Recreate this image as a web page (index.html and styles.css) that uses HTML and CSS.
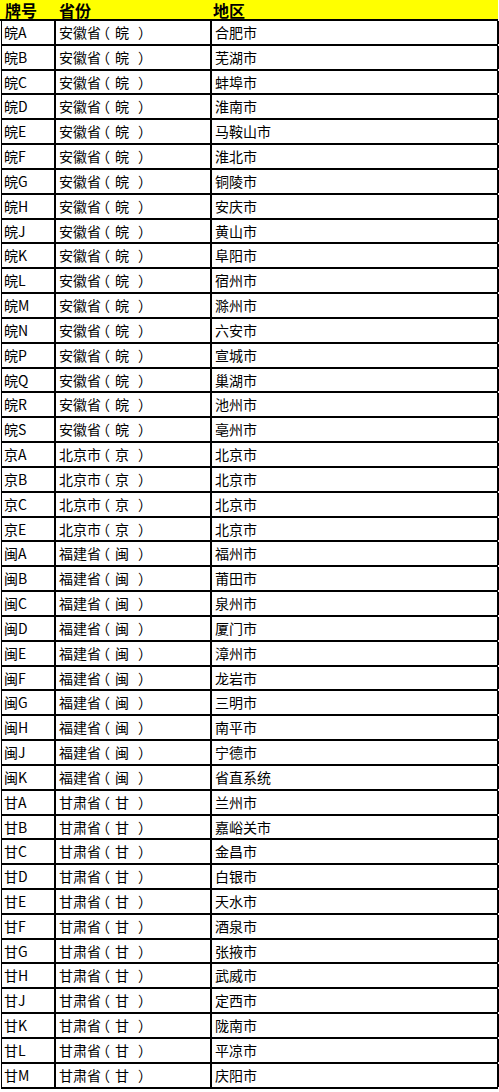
FILE: index.html
```html
<!DOCTYPE html>
<html lang="zh-CN">
<head>
<meta charset="utf-8">
<title>车牌号对照表</title>
<link rel="stylesheet" href="styles.css">
</head>
<body>
<div class="sheet">
  <div class="head">
    <div class="hc c1">牌号</div>
    <div class="hc c2">省份</div>
    <div class="hc c3">地区</div>
  </div>
  <div class="row"><div class="cell">皖A</div><div class="cell">安徽省<span class="lp">（</span>皖<span class="rp">）</span></div><div class="cell">合肥市</div></div>
  <div class="row"><div class="cell">皖B</div><div class="cell">安徽省<span class="lp">（</span>皖<span class="rp">）</span></div><div class="cell">芜湖市</div></div>
  <div class="row"><div class="cell">皖C</div><div class="cell">安徽省<span class="lp">（</span>皖<span class="rp">）</span></div><div class="cell">蚌埠市</div></div>
  <div class="row"><div class="cell">皖D</div><div class="cell">安徽省<span class="lp">（</span>皖<span class="rp">）</span></div><div class="cell">淮南市</div></div>
  <div class="row"><div class="cell">皖E</div><div class="cell">安徽省<span class="lp">（</span>皖<span class="rp">）</span></div><div class="cell">马鞍山市</div></div>
  <div class="row"><div class="cell">皖F</div><div class="cell">安徽省<span class="lp">（</span>皖<span class="rp">）</span></div><div class="cell">淮北市</div></div>
  <div class="row"><div class="cell">皖G</div><div class="cell">安徽省<span class="lp">（</span>皖<span class="rp">）</span></div><div class="cell">铜陵市</div></div>
  <div class="row"><div class="cell">皖H</div><div class="cell">安徽省<span class="lp">（</span>皖<span class="rp">）</span></div><div class="cell">安庆市</div></div>
  <div class="row"><div class="cell">皖J</div><div class="cell">安徽省<span class="lp">（</span>皖<span class="rp">）</span></div><div class="cell">黄山市</div></div>
  <div class="row"><div class="cell">皖K</div><div class="cell">安徽省<span class="lp">（</span>皖<span class="rp">）</span></div><div class="cell">阜阳市</div></div>
  <div class="row"><div class="cell">皖L</div><div class="cell">安徽省<span class="lp">（</span>皖<span class="rp">）</span></div><div class="cell">宿州市</div></div>
  <div class="row"><div class="cell">皖M</div><div class="cell">安徽省<span class="lp">（</span>皖<span class="rp">）</span></div><div class="cell">滁州市</div></div>
  <div class="row"><div class="cell">皖N</div><div class="cell">安徽省<span class="lp">（</span>皖<span class="rp">）</span></div><div class="cell">六安市</div></div>
  <div class="row"><div class="cell">皖P</div><div class="cell">安徽省<span class="lp">（</span>皖<span class="rp">）</span></div><div class="cell">宣城市</div></div>
  <div class="row"><div class="cell">皖Q</div><div class="cell">安徽省<span class="lp">（</span>皖<span class="rp">）</span></div><div class="cell">巢湖市</div></div>
  <div class="row"><div class="cell">皖R</div><div class="cell">安徽省<span class="lp">（</span>皖<span class="rp">）</span></div><div class="cell">池州市</div></div>
  <div class="row"><div class="cell">皖S</div><div class="cell">安徽省<span class="lp">（</span>皖<span class="rp">）</span></div><div class="cell">亳州市</div></div>
  <div class="row"><div class="cell">京A</div><div class="cell">北京市<span class="lp">（</span>京<span class="rp">）</span></div><div class="cell">北京市</div></div>
  <div class="row"><div class="cell">京B</div><div class="cell">北京市<span class="lp">（</span>京<span class="rp">）</span></div><div class="cell">北京市</div></div>
  <div class="row"><div class="cell">京C</div><div class="cell">北京市<span class="lp">（</span>京<span class="rp">）</span></div><div class="cell">北京市</div></div>
  <div class="row"><div class="cell">京E</div><div class="cell">北京市<span class="lp">（</span>京<span class="rp">）</span></div><div class="cell">北京市</div></div>
  <div class="row"><div class="cell">闽A</div><div class="cell">福建省<span class="lp">（</span>闽<span class="rp">）</span></div><div class="cell">福州市</div></div>
  <div class="row"><div class="cell">闽B</div><div class="cell">福建省<span class="lp">（</span>闽<span class="rp">）</span></div><div class="cell">莆田市</div></div>
  <div class="row"><div class="cell">闽C</div><div class="cell">福建省<span class="lp">（</span>闽<span class="rp">）</span></div><div class="cell">泉州市</div></div>
  <div class="row"><div class="cell">闽D</div><div class="cell">福建省<span class="lp">（</span>闽<span class="rp">）</span></div><div class="cell">厦门市</div></div>
  <div class="row"><div class="cell">闽E</div><div class="cell">福建省<span class="lp">（</span>闽<span class="rp">）</span></div><div class="cell">漳州市</div></div>
  <div class="row"><div class="cell">闽F</div><div class="cell">福建省<span class="lp">（</span>闽<span class="rp">）</span></div><div class="cell">龙岩市</div></div>
  <div class="row"><div class="cell">闽G</div><div class="cell">福建省<span class="lp">（</span>闽<span class="rp">）</span></div><div class="cell">三明市</div></div>
  <div class="row"><div class="cell">闽H</div><div class="cell">福建省<span class="lp">（</span>闽<span class="rp">）</span></div><div class="cell">南平市</div></div>
  <div class="row"><div class="cell">闽J</div><div class="cell">福建省<span class="lp">（</span>闽<span class="rp">）</span></div><div class="cell">宁德市</div></div>
  <div class="row"><div class="cell">闽K</div><div class="cell">福建省<span class="lp">（</span>闽<span class="rp">）</span></div><div class="cell">省直系统</div></div>
  <div class="row"><div class="cell">甘A</div><div class="cell">甘肃省<span class="lp">（</span>甘<span class="rp">）</span></div><div class="cell">兰州市</div></div>
  <div class="row"><div class="cell">甘B</div><div class="cell">甘肃省<span class="lp">（</span>甘<span class="rp">）</span></div><div class="cell">嘉峪关市</div></div>
  <div class="row"><div class="cell">甘C</div><div class="cell">甘肃省<span class="lp">（</span>甘<span class="rp">）</span></div><div class="cell">金昌市</div></div>
  <div class="row"><div class="cell">甘D</div><div class="cell">甘肃省<span class="lp">（</span>甘<span class="rp">）</span></div><div class="cell">白银市</div></div>
  <div class="row"><div class="cell">甘E</div><div class="cell">甘肃省<span class="lp">（</span>甘<span class="rp">）</span></div><div class="cell">天水市</div></div>
  <div class="row"><div class="cell">甘F</div><div class="cell">甘肃省<span class="lp">（</span>甘<span class="rp">）</span></div><div class="cell">酒泉市</div></div>
  <div class="row"><div class="cell">甘G</div><div class="cell">甘肃省<span class="lp">（</span>甘<span class="rp">）</span></div><div class="cell">张掖市</div></div>
  <div class="row"><div class="cell">甘H</div><div class="cell">甘肃省<span class="lp">（</span>甘<span class="rp">）</span></div><div class="cell">武威市</div></div>
  <div class="row"><div class="cell">甘J</div><div class="cell">甘肃省<span class="lp">（</span>甘<span class="rp">）</span></div><div class="cell">定西市</div></div>
  <div class="row"><div class="cell">甘K</div><div class="cell">甘肃省<span class="lp">（</span>甘<span class="rp">）</span></div><div class="cell">陇南市</div></div>
  <div class="row"><div class="cell">甘L</div><div class="cell">甘肃省<span class="lp">（</span>甘<span class="rp">）</span></div><div class="cell">平凉市</div></div>
  <div class="row"><div class="cell">甘M</div><div class="cell">甘肃省<span class="lp">（</span>甘<span class="rp">）</span></div><div class="cell">庆阳市</div></div>
</div>
</body>
</html>
```

FILE: styles.css
```css
html, body {
  margin: 0;
  padding: 0;
  background: #ffffff;
}

body {
  font-family: "Noto Sans CJK SC", "Noto Sans", sans-serif;
  color: #000000;
}

.sheet {
  width: 498px;
}

.head {
  display: grid;
  grid-template-columns: 55px 156px 287px;
  height: 21px;
  box-sizing: border-box;
  background: #ffff00;
  border-bottom: 2px solid #000000;
}

.hc {
  font-size: 16px;
  font-weight: bold;
  line-height: 18px;
  padding-top: 1px;
  white-space: nowrap;
}

.c1 {
  padding-left: 5px;
}

.c2 {
  padding-left: 4px;
}

.c3 {
  padding-left: 2px;
}

.row {
  display: grid;
  grid-template-columns: 54px 156px 287px;
  height: 24.84px;
  box-sizing: border-box;
  margin-left: 1px;
  border-left: 1px solid #000000;
  border-bottom: 2px solid #000000;
}

.cell {
  font-size: 14px;
  line-height: 22px;
  padding-left: 2px;
  border-right: 2px solid #000000;
  white-space: nowrap;
  overflow: hidden;
}

.cell + .cell {
  padding-left: 3px;
}

.lp {
  font-feature-settings: "halt";
  margin-left: 2px;
  margin-right: 5px;
}

.rp {
  font-feature-settings: "halt";
  margin-left: 9px;
}
```
